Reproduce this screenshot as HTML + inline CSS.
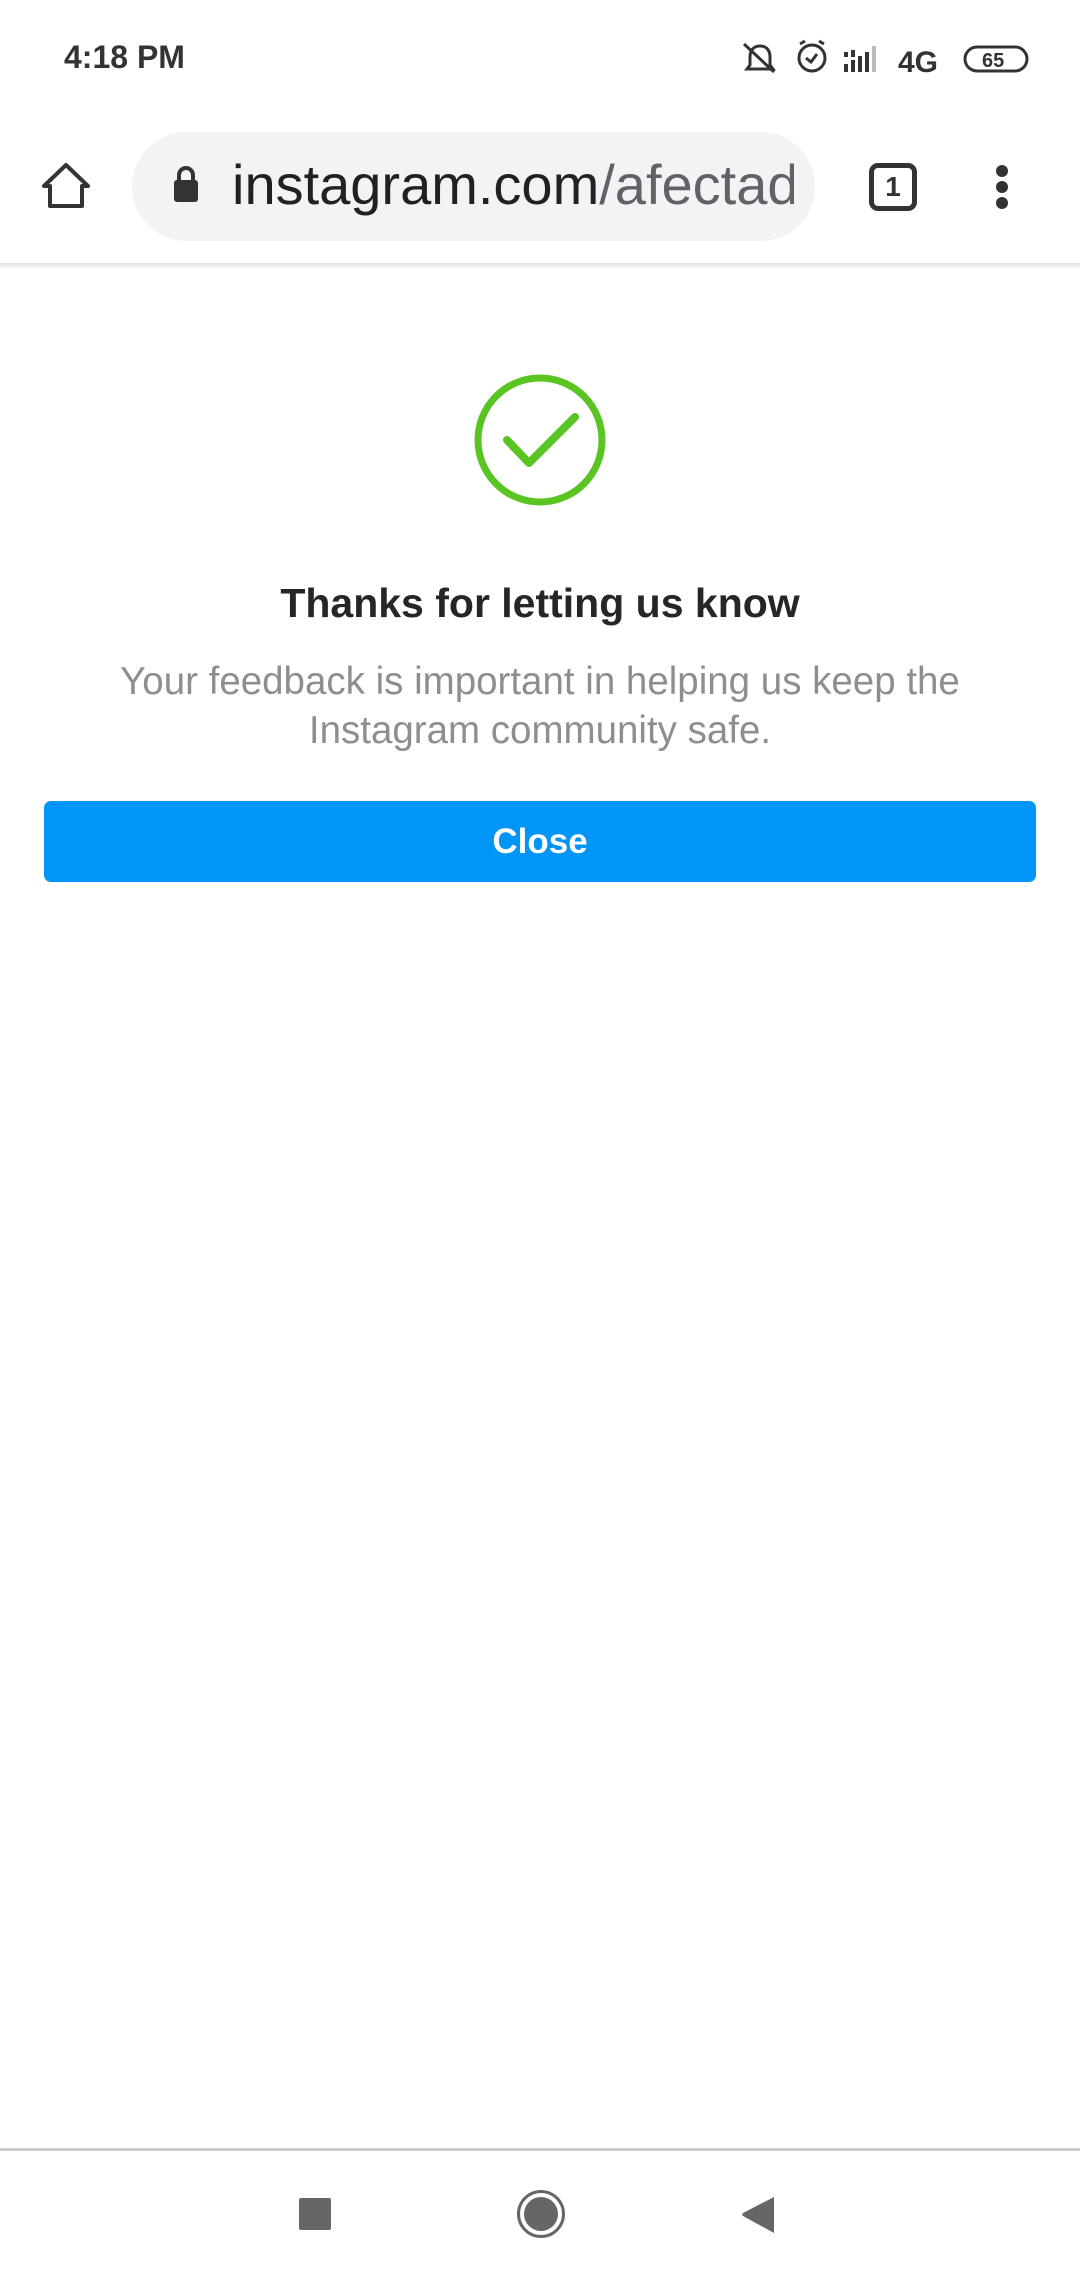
<!DOCTYPE html>
<html><head><meta charset="utf-8"><style>
*{margin:0;padding:0;box-sizing:border-box}
body{width:1080px;height:2280px;background:#fff;font-family:"Liberation Sans",Roboto,sans-serif;position:relative;overflow:hidden}
.abs{position:absolute}
</style></head><body>
<div class="abs" style="left:64px;top:39px;font-size:32px;font-weight:bold;color:#333">4:18 PM</div>
<svg class="abs" style="left:740px;top:38px" width="300" height="40" viewBox="0 0 300 40">
 <g fill="none" stroke="#333" stroke-width="3">
  <path d="M20 8c-7 0-10 5-10 11v8l-3 4h26l-3-4v-8c0-6-3-11-10-11z"/>
  <path d="M4 6l30 28"/>
  <circle cx="72" cy="20" r="13"/><path d="M66 20l5 4 6-8M60 6l5-3M84 6l-5-3"/>
 </g>
 <g fill="#333"><rect x="104" y="26" width="4" height="8"/><rect x="111" y="22" width="4" height="12"/><rect x="118" y="18" width="4" height="16"/><rect x="125" y="14" width="4" height="20"/><rect x="132" y="8" width="4" height="26" fill="#bbb"/>
 <rect x="104" y="14" width="4" height="5"/><rect x="111" y="12" width="4" height="7"/></g>
 <text x="158" y="34" font-size="30" font-weight="bold" fill="#333" font-family="Liberation Sans">4G</text>
 <rect x="225" y="9" width="62" height="24" rx="12" fill="none" stroke="#333" stroke-width="3"/>
 <text x="242" y="29" font-size="20" font-weight="bold" fill="#333" font-family="Liberation Sans">65</text>
</svg>
<svg class="abs" style="left:40px;top:160px" width="52" height="52" viewBox="0 0 52 52"><path d="M26 5L4 26h6v20h32V26h6z" fill="none" stroke="#333" stroke-width="4" stroke-linejoin="round"/></svg>
<div class="abs" style="left:132px;top:132px;width:683px;height:109px;border-radius:55px;background:#f1f3f4"></div>
<svg class="abs" style="left:172px;top:164px" width="28" height="40" viewBox="0 0 28 40"><path d="M7 17v-6a7 7 0 0114 0v6" fill="none" stroke="#333" stroke-width="4"/><rect x="2" y="16" width="24" height="22" rx="3" fill="#333"/></svg>
<div class="abs" style="left:232px;top:152px;font-size:56px;color:#202124;white-space:nowrap;width:562px;overflow:hidden">instagram.com<span style="color:#5f6368">/afectado</span></div>
<div class="abs" style="left:869px;top:163px;width:48px;height:48px;border:5px solid #333;border-radius:9px;font-size:28px;font-weight:bold;color:#333;text-align:center;line-height:38px">1</div>
<div class="abs" style="left:996px;top:165px;width:12px;height:12px;border-radius:6px;background:#333"></div>
<div class="abs" style="left:996px;top:181px;width:12px;height:12px;border-radius:6px;background:#333"></div>
<div class="abs" style="left:996px;top:197px;width:12px;height:12px;border-radius:6px;background:#333"></div>
<div class="abs" style="left:0;top:263px;width:1080px;height:6px;background:linear-gradient(#ddd,#fff)"></div>
<svg class="abs" style="left:470px;top:370px" width="140" height="140" viewBox="0 0 140 140"><circle cx="70" cy="70" r="62" fill="none" stroke="#5ac423" stroke-width="7"/><path d="M37 70l22 23 46-46" fill="none" stroke="#5ac423" stroke-width="8" stroke-linecap="round" stroke-linejoin="round"/></svg>
<div class="abs" style="left:0;top:580px;width:1080px;text-align:center;font-size:41px;font-weight:bold;color:#262626">Thanks for letting us know</div>
<div class="abs" style="left:0;top:657px;width:1080px;text-align:center;font-size:38.5px;line-height:49px;color:#8e8e8e">Your feedback is important in helping us keep the<br>Instagram community safe.</div>
<div class="abs" style="left:44px;top:801px;width:992px;height:81px;border-radius:7px;background:#0095f6;color:#fff;font-size:35px;font-weight:bold;text-align:center;line-height:81px">Close</div>
<div class="abs" style="left:0;top:2148px;width:1080px;height:3px;background:#ccc"></div>
<div class="abs" style="left:299px;top:2198px;width:32px;height:32px;border-radius:2px;background:#666"></div>
<div class="abs" style="left:517px;top:2190px;width:48px;height:48px;border-radius:50%;border:3px solid #666;padding:4px"><div style="width:34px;height:34px;border-radius:50%;background:#666"></div></div>
<svg class="abs" style="left:740px;top:2196px" width="36" height="38" viewBox="0 0 36 38"><path d="M34 1v36L3 20a2 2 0 010-3z" fill="#666"/></svg>
</body></html>
